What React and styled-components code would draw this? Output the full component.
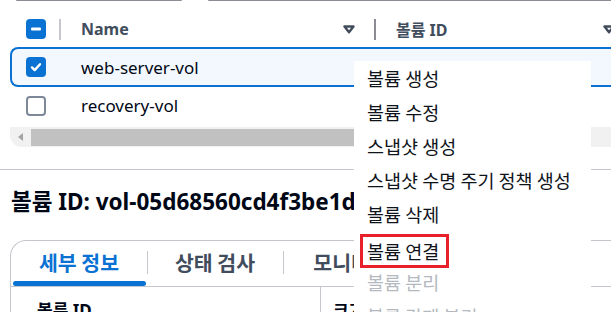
import React from "react";
import styled, { createGlobalStyle } from "styled-components";

const GlobalStyle = createGlobalStyle`
  html, body {
    margin: 0;
    padding: 0;
    background: #ffffff;
  }
  body {
    font-family: "Noto Sans", "Noto Sans CJK KR", sans-serif;
    color: #000716;
  }
`;

const Page = styled.div`
  position: relative;
  width: 611px;
  height: 312px;
  overflow: hidden;
  background: #ffffff;
`;

const FilterBar = styled.div`
  display: flex;
  gap: 26px;
  height: 1px;
  padding-left: 16px;
`;

const FilterField = styled.div`
  flex: ${({ $grow }) => ($grow ? 1 : "none")};
  width: ${({ $width }) => $width || "auto"};
  margin-right: ${({ $grow }) => ($grow ? "-20px" : 0)};
  border-bottom: 1.5px solid #8c8c94;
  border-radius: 0 0 4px 4px;
`;

const Table = styled.div`
  margin-left: 10px;
`;

const HeaderRow = styled.div`
  display: grid;
  grid-template-columns: 49px 315px 260px;
  height: 46px;
  padding-top: 10px;
  box-sizing: border-box;
  align-items: center;
`;

const DataRow = styled.div`
  display: grid;
  grid-template-columns: 49px 315px 260px;
  align-items: center;
  box-sizing: border-box;
  height: ${({ $selected }) => ($selected ? "40px" : "37px")};
  margin-right: -30px;
  margin-left: ${({ $selected }) => ($selected ? "0" : "2px")};
  background: ${({ $selected }) => ($selected ? "#f2f8fd" : "transparent")};
  border: ${({ $selected }) => ($selected ? "2px solid #0972d3" : "none")};
  border-right: none;
  border-radius: 8px 0 0 8px;
`;

const CheckCell = styled.div`
  display: flex;
  align-items: center;
  padding-left: ${({ $inset }) => $inset || "16px"};
`;

const Box = styled.span`
  display: flex;
  align-items: center;
  justify-content: center;
  width: 20px;
  height: 20px;
  box-sizing: border-box;
  border-radius: 4px;
  background: ${({ $on }) => ($on ? "#0972d3" : "#ffffff")};
  border: ${({ $on }) => ($on ? "none" : "2px solid #7d8998")};
`;

const HeaderCell = styled.div`
  display: flex;
  align-items: center;
  height: 21px;
  padding-right: 19px;
`;

const ColDivider = styled.span`
  width: 2px;
  height: 21px;
  background: ${({ $tone }) => $tone || "#c6c6cd"};
  margin-right: 20px;
  flex: none;
`;

const HeaderLabel = styled.span`
  flex: 1;
  font-size: 16px;
  font-weight: 700;
  color: #414d5c;
  white-space: nowrap;
`;

const Cell = styled.div`
  font-size: 17px;
  white-space: nowrap;
  padding-left: ${({ $pad }) => $pad || "20px"};
`;

const IdLink = styled.span`
  font-size: 16px;
  color: #0972d3;
`;

const ScrollTrack = styled.div`
  display: flex;
  align-items: center;
  height: 20px;
  margin-top: 3px;
  margin-right: -20px;
  background: #f1f1f1;
  border-bottom-left-radius: 12px;
`;

const ScrollArrow = styled.span`
  width: 0;
  height: 0;
  margin: 0 8px;
  border-top: 4px solid transparent;
  border-bottom: 4px solid transparent;
  border-right: 5px solid #a3a3a3;
`;

const ScrollThumb = styled.span`
  width: 420px;
  height: 17px;
  background: #c1c1c1;
`;

const Rule = styled.hr`
  margin: 22px 0 0;
  border: none;
  border-top: 1px solid #c6c6cd;
`;

const Heading = styled.h2`
  margin: 18px 0 0 11px;
  font-size: 22.5px;
  line-height: 28px;
  font-weight: 700;
  white-space: nowrap;
  color: #000716;
`;

const TabPanel = styled.div`
  margin: 24px 0 0 10px;
  border-top: 1px solid #c6c6cd;
  border-left: 1px solid #c6c6cd;
  border-top-left-radius: 16px;
`;

const TabList = styled.div`
  display: flex;
  height: 45px;
  border-bottom: 1px solid #c6c6cd;
`;

const Tab = styled.div`
  position: relative;
  display: flex;
  align-items: center;
  justify-content: center;
  width: 136px;
  padding-bottom: 4px;
  box-sizing: border-box;
  font-family: "Noto Sans CJK KR", sans-serif;
  font-size: 20.5px;
  font-weight: 700;
  white-space: nowrap;
  color: ${({ $active }) => ($active ? "#0972d3" : "#414d5c")};

  &::before {
    content: "";
    display: ${({ $first }) => ($first ? "none" : "block")};
    position: absolute;
    left: 0;
    top: 10px;
    width: 1px;
    height: 23px;
    background: #c6c6cd;
  }

  &::after {
    content: "";
    display: ${({ $active }) => ($active ? "block" : "none")};
    position: absolute;
    left: 2px;
    right: 1px;
    bottom: 0;
    height: 5px;
    border-radius: 3px;
    background: #0972d3;
  }
`;

const DetailGrid = styled.div`
  display: grid;
  grid-template-columns: 309px 1fr;
`;

const DetailCell = styled.div`
  padding: 10px 0 0 ${({ $pad }) => $pad};
  height: 40px;
  font-size: 17px;
  font-weight: 700;
  white-space: nowrap;
  border-left: ${({ $divided }) => ($divided ? "1px solid #c6c6cd" : "none")};
`;

const Menu = styled.ul`
  position: absolute;
  left: 354px;
  top: 61px;
  width: 237px;
  bottom: -20px;
  margin: 0;
  padding: 0;
  list-style: none;
  background: #ffffff;
`;

const MenuItem = styled.li`
  display: flex;
  align-items: center;
  height: 34px;
  padding-left: 13px;
  font-family: "Noto Sans CJK KR", sans-serif;
  font-size: 18.5px;
  white-space: nowrap;
  color: ${({ $disabled }) => ($disabled ? "#b4b9bf" : "#0f141a")};
`;

const Highlight = styled.span`
  display: inline-flex;
  align-items: center;
  height: 34px;
  box-sizing: border-box;
  margin: 5px 0 0 -7px;
  padding: 0 7px 0 4px;
  border: 3px solid #e8202a;
`;

function Caret() {
  return (
    <svg width="12" height="9" viewBox="0 0 12 9">
      <path d="M1.5 1.5h9L6 7.2z" fill="#ffffff" stroke="#414d5c" strokeWidth="2.4" strokeLinejoin="round" />
    </svg>
  );
}

function Checkbox({ state }) {
  if (state === "none") return <Box />;
  return (
    <Box $on>
      {state === "some" ? (
        <svg width="12" height="4" viewBox="0 0 12 4">
          <rect x="1" y="0.5" width="10" height="3" rx="1" fill="#ffffff" />
        </svg>
      ) : (
        <svg width="14" height="14" viewBox="0 0 14 14">
          <path d="M3 7.4l2.7 2.7L11 4.2" fill="none" stroke="#ffffff" strokeWidth="2.4" strokeLinecap="round" strokeLinejoin="round" />
        </svg>
      )}
    </Box>
  );
}

const volumes = [
  { name: "web-server-vol", id: "vol-05d68560cd4f3be1d", selected: true },
  { name: "recovery-vol", id: "vol-0b7e1c29a4d3f8e52", selected: false },
];

const actions = [
  { label: "볼륨 생성" },
  { label: "볼륨 수정" },
  { label: "스냅샷 생성" },
  { label: "스냅샷 수명 주기 정책 생성" },
  { label: "볼륨 삭제" },
  { label: "볼륨 연결", marked: true },
  { label: "볼륨 분리", disabled: true },
  { label: "볼륨 강제 분리", disabled: true },
];

export default function App() {
  return (
    <>
      <GlobalStyle />
      <Page>
        <FilterBar>
          <FilterField $width="166px" />
          <FilterField $grow />
        </FilterBar>

        <Table>
          <HeaderRow>
            <CheckCell>
              <Checkbox state="some" />
            </CheckCell>
            <HeaderCell>
              <ColDivider />
              <HeaderLabel>Name</HeaderLabel>
              <Caret />
            </HeaderCell>
            <HeaderCell>
              <ColDivider $tone="#8c8c94" />
              <HeaderLabel>볼륨 ID</HeaderLabel>
              <Caret />
            </HeaderCell>
          </HeaderRow>

          {volumes.map((v) => (
            <DataRow key={v.id} $selected={v.selected}>
              <CheckCell $inset="14px">
                <Checkbox state={v.selected ? "all" : "none"} />
              </CheckCell>
              <Cell>{v.name}</Cell>
              <Cell $pad="21px">
                <IdLink>{v.id}</IdLink>
              </Cell>
            </DataRow>
          ))}

          <ScrollTrack>
            <ScrollArrow />
            <ScrollThumb />
          </ScrollTrack>
        </Table>

        <Rule />
        <Heading>볼륨 ID: vol-05d68560cd4f3be1d</Heading>

        <TabPanel>
          <TabList>
            <Tab $active $first>세부 정보</Tab>
            <Tab>상태 검사</Tab>
            <Tab>모니터링</Tab>
            <Tab>태그</Tab>
          </TabList>
          <DetailGrid>
            <DetailCell $pad="26px">볼륨 ID</DetailCell>
            <DetailCell $pad="12px" $divided>크기</DetailCell>
          </DetailGrid>
        </TabPanel>

        <Menu>
          {actions.map((a) => (
            <MenuItem key={a.label} $disabled={a.disabled}>
              {a.marked ? <Highlight>{a.label}</Highlight> : a.label}
            </MenuItem>
          ))}
        </Menu>
      </Page>
    </>
  );
}
